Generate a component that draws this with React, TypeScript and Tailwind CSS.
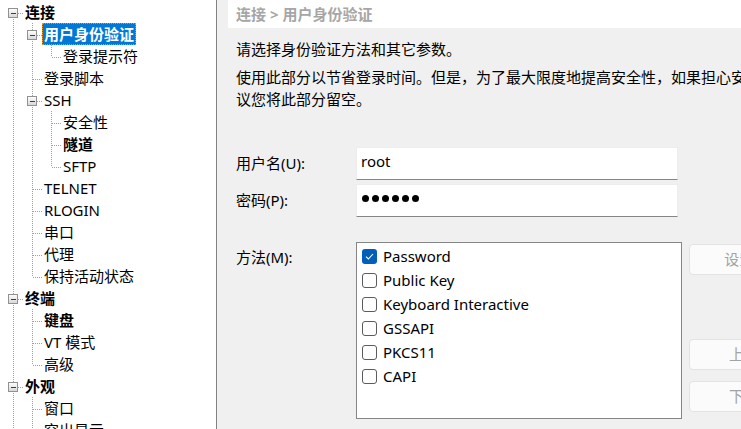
import type { ReactNode } from "react";

type TreeNode = {
  label: string;
  bold?: boolean;
  selected?: boolean;
  children?: TreeNode[];
};

const TREE: TreeNode[] = [
  {
    label: "连接",
    bold: true,
    children: [
      { label: "用户身份验证", bold: true, selected: true, children: [{ label: "登录提示符" }] },
      { label: "登录脚本" },
      {
        label: "SSH",
        children: [{ label: "安全性" }, { label: "隧道", bold: true }, { label: "SFTP" }],
      },
      { label: "TELNET" },
      { label: "RLOGIN" },
      { label: "串口" },
      { label: "代理" },
      { label: "保持活动状态" },
    ],
  },
  {
    label: "终端",
    bold: true,
    children: [{ label: "键盘", bold: true }, { label: "VT 模式" }, { label: "高级" }],
  },
  {
    label: "外观",
    bold: true,
    children: [{ label: "窗口" }, { label: "突出显示" }, { label: "边距" }],
  },
  { label: "高级", bold: true, children: [{ label: "跟踪" }, { label: "日志记录" }] },
];

type Row = {
  node: TreeNode;
  isFirst: boolean;
  hasNext: boolean;
  rails: boolean[];
};

function flatten(nodes: TreeNode[], level: number, rails: boolean[], out: Row[]) {
  nodes.forEach((node, i) => {
    const hasNext = i < nodes.length - 1;
    out.push({ node, isFirst: level === 0 && i === 0, hasNext, rails });
    if (node.children) flatten(node.children, level + 1, [...rails, hasNext], out);
  });
  return out;
}

const DOT = { stroke: "#a0a0a0", strokeWidth: 1, strokeDasharray: "1 1" };

function Guide({ rail }: { rail: boolean }) {
  return (
    <svg width="19" height="22" className="shrink-0" shapeRendering="crispEdges">
      {rail && <line x1="9.5" y1="0" x2="9.5" y2="22" {...DOT} />}
    </svg>
  );
}

function Connector({ top, bottom, expander }: { top: boolean; bottom: boolean; expander: boolean }) {
  return (
    <svg width="19" height="22" className="shrink-0" shapeRendering="crispEdges">
      <defs>
        <linearGradient id="exp" x1="0" y1="0" x2="0" y2="1">
          <stop offset="0" stopColor="#ffffff" />
          <stop offset="1" stopColor="#d6d6d6" />
        </linearGradient>
      </defs>
      {top && <line x1="9.5" y1="0" x2="9.5" y2="12" {...DOT} />}
      {bottom && <line x1="9.5" y1="12" x2="9.5" y2="22" {...DOT} />}
      <line x1="10" y1="12.5" x2="19" y2="12.5" {...DOT} />
      {expander && (
        <>
          <rect x="4.5" y="7.5" width="9" height="9" fill="url(#exp)" stroke="#919191" />
          <line x1="7" y1="12.5" x2="12" y2="12.5" stroke="#3a3a5a" />
        </>
      )}
    </svg>
  );
}

function TreeRow({ row }: { row: Row }) {
  const { node } = row;
  return (
    <div className="flex h-[22px] items-stretch pl-[4px]">
      {row.rails.map((r, i) => (
        <Guide key={i} rail={r} />
      ))}
      <Connector top={!row.isFirst} bottom={row.hasNext} expander={!!node.children} />
      <div className="flex items-center">
        <span
          className={`flex h-[22px] items-center whitespace-nowrap px-[2px] leading-[22px] ${
            node.bold ? "font-bold" : ""
          } ${
            node.selected
              ? "bg-[#0078d7] text-white outline-1 outline-dotted outline-[#e8962a] -outline-offset-1"
              : "text-black"
          }`}
        >
          {node.label}
        </span>
      </div>
    </div>
  );
}

function Checkbox({ checked }: { checked?: boolean }) {
  if (checked) {
    return (
      <span className="flex h-[15px] w-[15px] shrink-0 items-center justify-center rounded-[3px] bg-[#005fb8]">
        <svg width="9" height="7" viewBox="0 0 9 7">
          <path d="M1 3.6 L3.4 6 L8 1" fill="none" stroke="#fff" strokeWidth="1.1" />
        </svg>
      </span>
    );
  }
  return <span className="h-[15px] w-[15px] shrink-0 rounded-[3px] border border-[#5c5c5c] bg-white" />;
}

function SideButton({ children, className = "" }: { children: ReactNode; className?: string }) {
  return (
    <div
      className={`flex h-[31px] w-[130px] shrink-0 items-center justify-center rounded-[4px] border border-[#e3e3e3] bg-[#fbfbfb] whitespace-nowrap text-[#a3a3a3] ${className}`}
    >
      {children}
    </div>
  );
}

const METHODS = [
  { name: "Password", checked: true },
  { name: "Public Key" },
  { name: "Keyboard Interactive" },
  { name: "GSSAPI" },
  { name: "PKCS11" },
  { name: "CAPI" },
];

export default function App() {
  const rows = flatten(TREE, 0, [], []);

  return (
    <div className="flex h-[429px] w-[741px] overflow-hidden bg-white text-[15px] font-['Noto_Sans','Noto_Sans_CJK_SC',sans-serif] text-black">
      {/* session tree */}
      <div className="w-[216px] shrink-0 overflow-hidden bg-white pt-[1px]">
        {rows.map((row, i) => (
          <TreeRow key={i} row={row} />
        ))}
      </div>

      {/* settings page */}
      <div className="min-w-0 flex-1 overflow-hidden border-l border-[#828282] bg-[#f0f0f0] pl-[11px]">
        <div className="flex h-[28px] items-center bg-white pl-[8px] font-bold whitespace-nowrap text-[#a6a6a6]">
          连接 &gt; 用户身份验证
        </div>

        <div className="pl-[8px] whitespace-nowrap">
          <p className="mt-[10px] leading-[22px]">请选择身份验证方法和其它参数。</p>
          <div className="mt-[6px] leading-[22px]">
            <p>使用此部分以节省登录时间。但是，为了最大限度地提高安全性，如果担心安全性问题，建</p>
            <p>议您将此部分留空。</p>
          </div>

          <div className="mt-[37px] flex flex-col gap-[4px]">
            <div className="flex items-center">
              <span className="w-[120px] shrink-0">用户名(U):</span>
              <div className="flex h-[33px] w-[322px] shrink-0 items-center border border-[#ededed] border-b-[#868686] bg-white px-[4px] pb-[4px]">
                root
              </div>
            </div>
            <div className="flex items-center">
              <span className="w-[120px] shrink-0">密码(P):</span>
              <div className="flex h-[33px] w-[322px] shrink-0 items-center gap-[3px] border border-[#ededed] border-b-[#868686] bg-white px-[5px] pb-[4px]">
                {[0, 1, 2, 3, 4, 5].map((d) => (
                  <span key={d} className="h-[7px] w-[7px] rounded-full bg-black" />
                ))}
              </div>
            </div>
          </div>

          <div className="mt-[25px] flex items-start">
            <span className="w-[120px] shrink-0 pt-[4px] leading-[22px]">方法(M):</span>
            <div className="h-[177px] w-[326px] shrink-0 border border-[#868686] bg-white pt-[1px] pl-[5px]">
              {METHODS.map((m) => (
                <div key={m.name} className="flex h-[24px] items-center gap-[6px]">
                  <Checkbox checked={m.checked} />
                  <span>{m.name}</span>
                </div>
              ))}
            </div>
            <div className="ml-[7px] flex flex-col pt-[2px]">
              <SideButton>设置(S)...</SideButton>
              <SideButton className="mt-[64px]">上移(U)</SideButton>
              <SideButton className="mt-[11px]">下移(D)</SideButton>
            </div>
          </div>
        </div>
      </div>
    </div>
  );
}
